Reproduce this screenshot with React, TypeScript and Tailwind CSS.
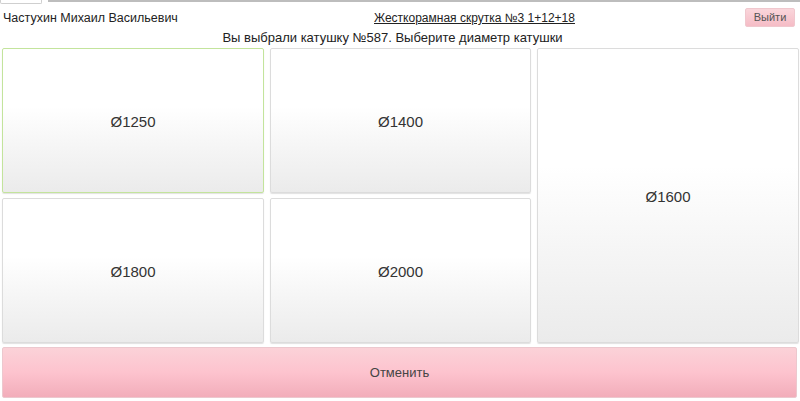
const font = { fontFamily: '"Liberation Sans", Arial, sans-serif' };

function DiameterButton({
  label,
  active,
  className = "",
}: {
  label: string;
  active?: boolean;
  className?: string;
}) {
  return (
    <button
      type="button"
      className={`flex items-center justify-center rounded-[2px] border bg-gradient-to-b from-white from-40% to-[#ebebeb] pt-[3px] text-[15px] text-[#333] shadow-[0_1px_1px_rgba(0,0,0,0.12)] ${
        active ? "border-[#c3e49c]" : "border-[#dcdcdc]"
      } ${className}`}
    >
      {label}
    </button>
  );
}

export default function App() {
  return (
    <div style={font} className="relative h-[401px] w-[800px] overflow-hidden bg-white text-[#333]">
      {/* top strip */}
      <div className="flex h-[4px] items-start">
        <div className="h-[4px] w-[42px] rounded-b-[2px] border-x border-b border-[#cfcfcf]" />
        <div className="ml-[6px] h-[2px] flex-1 bg-[#bdbdbd]" />
      </div>

      <header className="relative flex h-[25px] items-center px-[3px]">
        <span className="pt-[3px] text-[12.5px] text-[#222]">Частухин Михаил Васильевич</span>
        <a className="absolute left-[374px] top-[5px] text-[12px] text-[#222] underline">
          Жесткорамная скрутка №3 1+12+18
        </a>
        <button
          type="button"
          className="ml-auto mr-[2px] mt-[1px] h-[19px] w-[50px] rounded-[2px] border border-[#f0c8ce] bg-gradient-to-b from-[#fad6db] to-[#f5bcc6] text-[11px] text-[#555]"
        >
          Выйти
        </button>
      </header>

      <p className="mt-[1px] pr-[15px] text-center text-[13px] leading-[16px] text-[#222]">
        Вы выбрали катушку №587. Выберите диаметр катушки
      </p>

      <div className="mt-[2px] grid h-[295px] grid-cols-[262px_261px_262px] grid-rows-2 gap-x-[6px] gap-y-[5px] pl-[2px]">
        <DiameterButton label="Ø1250" active />
        <DiameterButton label="Ø1400" />
        <DiameterButton label="Ø1600" className="row-span-2" />
        <DiameterButton label="Ø1800" />
        <DiameterButton label="Ø2000" />
      </div>

      <div className="mt-[4px] pl-[2px] pr-[3px]">
        <button
          type="button"
          className="flex h-[51px] w-full items-center justify-center rounded-[2px] border border-[#ecc8ce] bg-gradient-to-b from-[#fbd2d8] via-[#fdc3ce] to-[#f2adba] text-[13px] text-[#444]"
        >
          Отменить
        </button>
      </div>
    </div>
  );
}
